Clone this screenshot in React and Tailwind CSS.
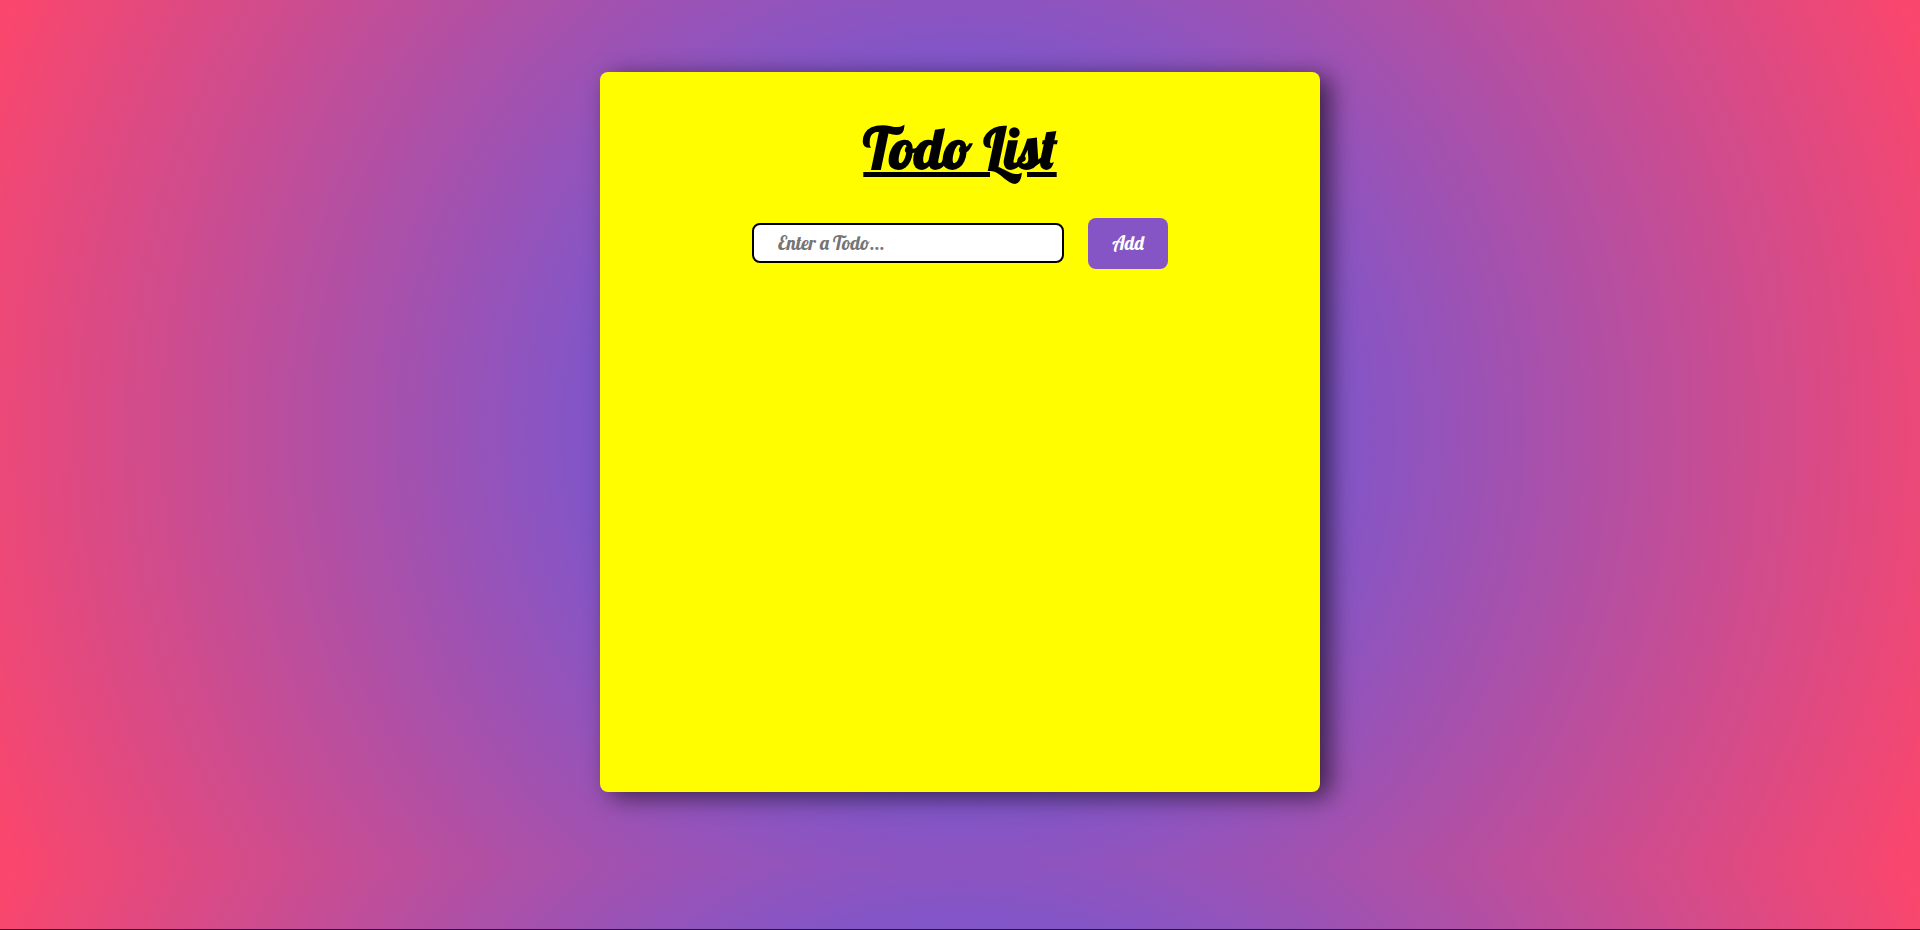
import { useState } from "react";

export default function App() {
  const [text, setText] = useState("");
  const [todos, setTodos] = useState([]);

  const addTodo = (event) => {
    event.preventDefault();
    const value = text.trim();
    if (!value) return;
    setTodos([...todos, value]);
    setText("");
  };

  return (
    <div className="min-h-screen border-b border-[#2a0f50] bg-[radial-gradient(circle,#3f5efb_0%,#fc466b_100%)] bg-[length:100%_864px] px-4 py-[72px] font-['Lobster','Liberation_Serif',serif]">
      <main className="mx-auto flex min-h-[720px] w-full max-w-[720px] flex-col items-center rounded-lg bg-[#fffd00] px-6 pt-10 shadow-[10px_5px_24px_rgba(0,0,0,0.6)]">
        <h1 className="text-[56px] leading-[72px] font-bold text-black underline decoration-[5px]">
          Todo List
        </h1>
        <form onSubmit={addTodo} className="mt-[34px] flex items-start gap-6">
          <input
            type="text"
            aria-label="Todo"
            placeholder="Enter a Todo..."
            value={text}
            onChange={(event) => setText(event.target.value)}
            className="mt-[5px] h-10 w-[312px] rounded-lg border-2 border-black bg-white px-6 text-[19px] leading-6 text-black placeholder:text-[#757575]"
          />
          <button
            type="submit"
            className="h-[51px] w-20 rounded-lg bg-[#8555c6] pb-0.5 text-[19px] leading-6 text-white"
          >
            Add
          </button>
        </form>
        <ul className="mt-6 w-full max-w-[416px] text-xl">
          {todos.map((todo, index) => (
            <li key={index} className="py-2">
              {todo}
            </li>
          ))}
        </ul>
      </main>
    </div>
  );
}
